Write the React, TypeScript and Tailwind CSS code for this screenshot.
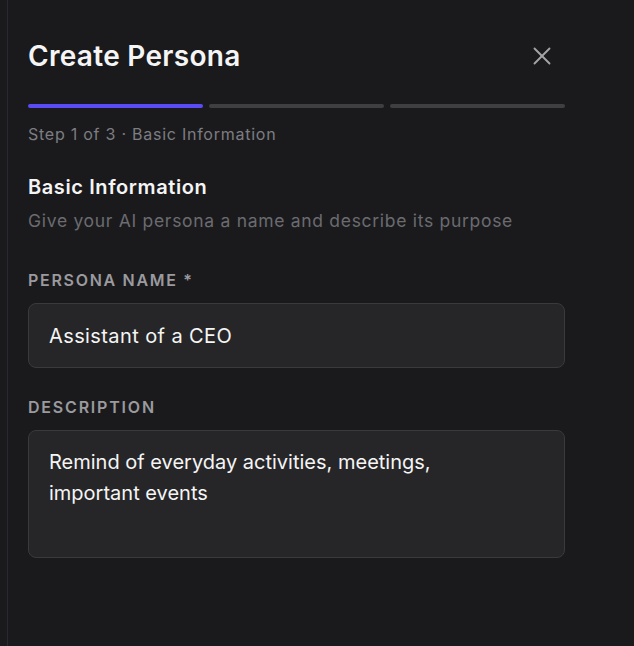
import { X } from "lucide-react";

const steps = [true, false, false];

export default function App() {
  return (
    <div
      className="flex h-[646px] w-[634px] bg-[#1a1a1d] text-white"
      style={{ fontFamily: "Inter, 'Noto Sans', sans-serif" }}
    >
      <div className="w-2 shrink-0 border-r border-[#2a2a2e] bg-[#1a1a1d]" />
      <div className="flex w-[557px] flex-col pl-[20px]">
        {/* Header */}
        <div className="flex items-center justify-between pt-[36px]">
          <h1 className="text-[28px] font-semibold leading-[40px] tracking-[0.3px] text-[#f5f5f5]">
            Create Persona
          </h1>
          <button className="mr-[7px] flex h-8 w-8 items-center justify-center text-[#a3a3a3]">
            <X className="h-[30px] w-[30px]" strokeWidth={1.5} />
          </button>
        </div>

        {/* Progress */}
        <div className="mt-[28px] flex gap-[6px]">
          {steps.map((active, i) => (
            <div
              key={i}
              className={
                active
                  ? "h-[4px] flex-1 rounded-full bg-[#5b4bf3]"
                  : "h-[4px] flex-1 rounded-full bg-[#3f3f42]"
              }
            />
          ))}
        </div>
        <p className="mt-[14px] text-[16px] leading-[24px] tracking-[0.75px] text-[#7d7d82]">
          Step 1 of 3 · Basic Information
        </p>

        {/* Section */}
        <h2 className="mt-[27px] text-[20px] font-semibold leading-[28px] tracking-[0.6px] text-[#f5f5f5]">
          Basic Information
        </h2>
        <p className="mt-[7px] text-[17.5px] leading-[26px] tracking-[0.7px] text-[#6b6b70]">
          Give your AI persona a name and describe its purpose
        </p>

        <label className="mt-[34px] text-[16px] font-semibold uppercase leading-[24px] tracking-[1.7px] text-[#9a9a9f]">
          Persona Name *
        </label>
        <div className="mt-[11px] flex h-[65px] items-center rounded-[8px] border border-[#3a3a3d] bg-[#262628] px-[20px] text-[20px] tracking-[0.4px] text-[#f5f5f5]">
          Assistant of a CEO
        </div>

        <label className="mt-[27px] text-[16px] font-semibold uppercase leading-[24px] tracking-[1.8px] text-[#9a9a9f]">
          Description
        </label>
        <div className="mt-[11px] h-[128px] rounded-[8px] border border-[#3a3a3d] bg-[#262628] px-[20px] pt-[16px] text-[20px] leading-[31px] text-[#f5f5f5]">
          Remind of everyday activities, meetings,
          <br />
          important events
        </div>
      </div>
    </div>
  );
}
